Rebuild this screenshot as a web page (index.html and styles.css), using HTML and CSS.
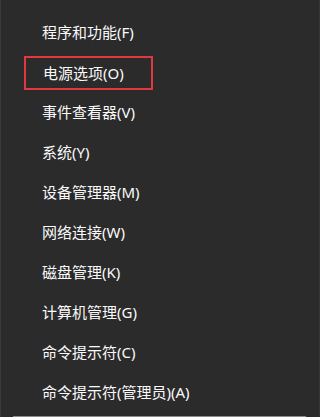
FILE: index.html
```html
<!DOCTYPE html>
<html lang="zh-CN">
<head>
<meta charset="utf-8">
<title>菜单</title>
<link rel="stylesheet" href="styles.css">
</head>
<body>
<div class="menu">
  <ul class="items">
    <li class="item">程序和功能(F)</li>
    <li class="item"><span class="marked">电源选项(O)</span></li>
    <li class="item">事件查看器(V)</li>
    <li class="item">系统(Y)</li>
    <li class="item">设备管理器(M)</li>
    <li class="item">网络连接(W)</li>
    <li class="item">磁盘管理(K)</li>
    <li class="item">计算机管理(G)</li>
    <li class="item">命令提示符(C)</li>
    <li class="item">命令提示符(管理员)(A)</li>
  </ul>
  <div class="edge"></div>
</div>
</body>
</html>
```
FILE: styles.css
```css
html, body {
  margin: 0;
  padding: 0;
  background: #2b2b2b;
}
.menu {
  width: 100%;
  height: 417px;
  box-sizing: border-box;
  border-left: 1px solid #3b3b3b;
  border-right: 1px solid #363636;
  display: flex;
  flex-direction: column;
  font-family: "Noto Sans", "Noto Sans CJK SC", sans-serif;
  font-size: 15px;
  font-weight: 400;
  color: #fafafa;
}
.items {
  list-style: none;
  margin: 0;
  padding: 11px 0 0 0;
  flex: 1;
}
.item {
  height: 40px;
  display: flex;
  align-items: center;
  padding-left: 41px;
  white-space: nowrap;
}
.marked {
  display: inline-flex;
  align-items: center;
  height: 34px;
  box-sizing: border-box;
  margin-left: -18px;
  margin-top: 3px;
  padding: 0 27px 0 17px;
  border: 2px solid #e0383e;
}
.edge {
  height: 1px;
  margin: 0 13px 0 12px;
  background: #8c8c8c;
}
```
